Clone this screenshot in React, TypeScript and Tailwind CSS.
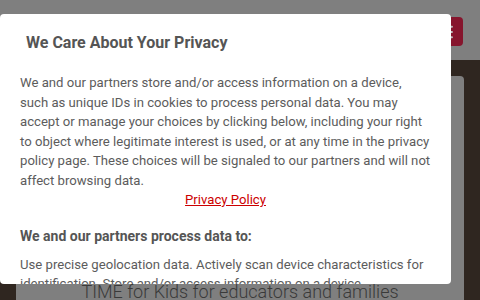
import { Menu } from 'lucide-react'

const FONT = 'font-["Roboto","Liberation_Sans",sans-serif]'

export default function App() {
  return (
    <div className={`relative h-[300px] w-[480px] overflow-hidden bg-[#2f2620] ${FONT}`}>
      {/* dimmed page behind the dialog */}
      <header className="flex h-[60px] items-start justify-end bg-[#7f7f7f] pr-[17px] pt-[17px]">
        <button className="flex h-[29px] w-[34px] items-center justify-center rounded-[4px] bg-[#86152d] text-[#bdbdbd]">
          <Menu size={18} strokeWidth={2.5} />
        </button>
      </header>
      <main className="px-[16px] pt-[16px]">
        <div className="h-[260px] rounded-[4px] bg-[#7f7f7f] pt-[203px]">
          <p className="text-center text-[18px] font-light leading-[26px] text-[#3a3a3a]">
            TIME for Kids for educators and families
          </p>
        </div>
      </main>

      {/* consent dialog */}
      <div className="absolute left-0 top-[14px] h-[270px] w-[451px] overflow-hidden rounded-[4px] bg-white px-5 pt-[17px] text-[#5c5c5c]">
        <h2 className="pl-[6px] text-[16px] font-bold leading-[24px] text-[#555]">We Care About Your Privacy</h2>
        <p className="mt-[18px] text-[13.15px] leading-[19.5px]">
          We and our partners store and/or access information on a device, such as unique IDs in cookies to process
          personal data. You may accept or manage your choices by clicking below, including your right to object where
          legitimate interest is used, or at any time in the privacy policy page. These choices will be signaled to our
          partners and will not affect browsing data.
        </p>
        <p className="text-center text-[13.15px] leading-[19.5px]">
          <a href="#" className="text-[#cc0000] underline">
            Privacy Policy
          </a>
        </p>
        <h3 className="mt-[16px] text-[14px] font-bold leading-[20px] text-[#555]">
          We and our partners process data to:
        </h3>
        <p className="mt-[9px] text-[13.15px] leading-[19.5px]">
          Use precise geolocation data. Actively scan device characteristics for identification. Store and/or access
          information on a device. Personalised advertising and content, advertising and content measurement, audience
          research and services development.
        </p>
      </div>
    </div>
  )
}
